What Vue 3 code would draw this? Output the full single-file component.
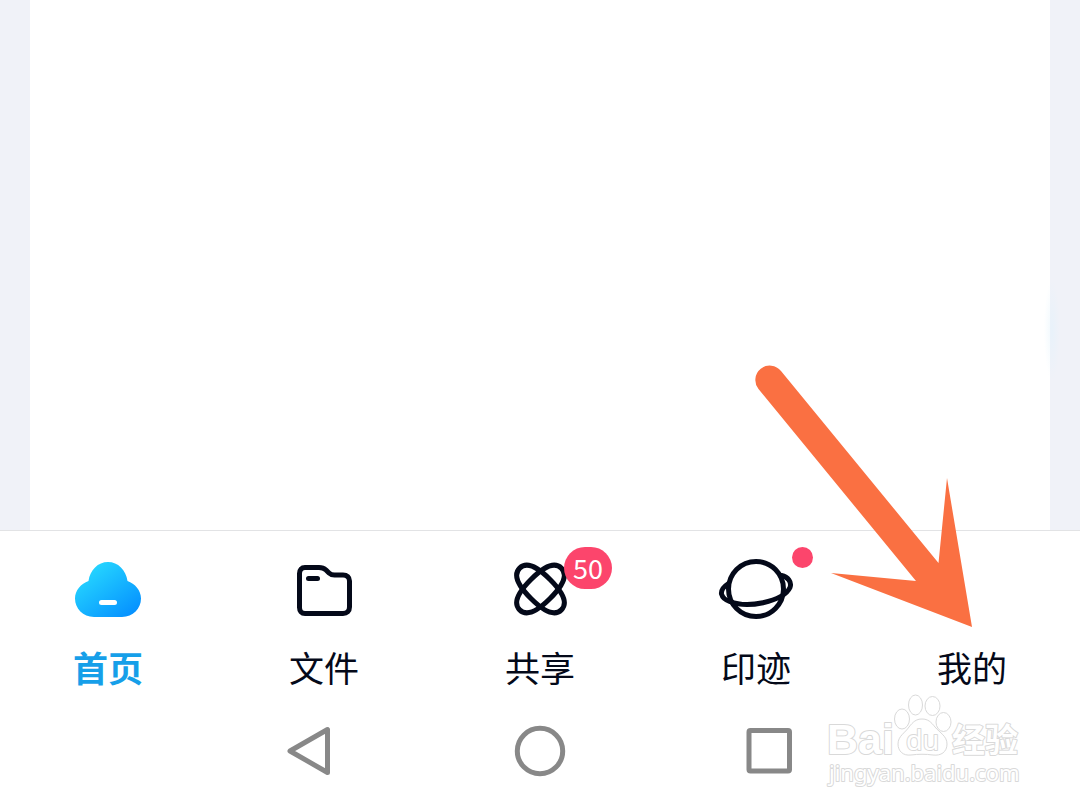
<script setup>
const tabs = [
  { id: 'home', label: '首页', active: true },
  { id: 'files', label: '文件' },
  { id: 'share', label: '共享', count: 50 },
  { id: 'moments', label: '印迹', dot: true },
  { id: 'mine', label: '我的' },
]
</script>

<template>
  <div class="screen">
    <main class="content">
      <section class="sheet"></section>
      <span class="edge-glow" aria-hidden="true"></span>
    </main>

    <nav class="tabs">
      <button
        v-for="tab in tabs"
        :key="tab.id"
        type="button"
        class="tab"
        :class="{ active: tab.active }"
      >
        <span class="icon">
          <svg v-if="tab.id === 'home'" viewBox="0 0 100 76">
            <defs>
              <linearGradient id="cloud" x1="0.15" y1="0.1" x2="0.9" y2="0.95">
                <stop offset="0" stop-color="#27d9ff" />
                <stop offset="1" stop-color="#0590ff" />
              </linearGradient>
            </defs>
            <path
              d="M36 69C25 69 17 60.500 17 50.500C17 42.500 23 35.500 30.500 33C32 22 40 14 50 14C60 14 68 22 69.500 33C77 35.500 83 42.500 83 50.500C83 60.500 75 69 64 69Z"
              fill="url(#cloud)"
            />
            <path d="M43.500 54.500H56.500" stroke="#fff" stroke-width="5" stroke-linecap="round" />
          </svg>
          <svg v-else-if="tab.id === 'files'" viewBox="0 0 100 76" class="line">
            <path
              d="M31 19.500H45C48 19.500 50 20.200 52 22L55 25C56.500 26.500 58 27 60.500 27H69C73 27 75.500 29.500 75.500 33V59C75.500 63 73 65.500 69 65.500H31C27.500 65.500 25.500 63 25.500 59.500V25.500C25.500 21.700 27.500 19.500 31 19.500Z"
            />
            <path d="M34.500 30.500H43.500" />
          </svg>
          <svg v-else-if="tab.id === 'share'" viewBox="0 0 100 76" class="line">
            <path
              v-for="angle in [45, -45]"
              :key="angle"
              :transform="`translate(50.5 41) rotate(${angle})`"
              d="M-29.500 0C-29.500 -11 -14 -13.500 0 -13.500S29.500 -11 29.500 0S14 13.500 0 13.500S-29.500 11 -29.500 0Z"
            />
          </svg>
          <svg v-else-if="tab.id === 'moments'" viewBox="0 0 100 76" class="line">
            <circle cx="50" cy="41" r="27.500" />
            <path
              d="M22.500 35.500C17 39 15 42 15.500 46C16.500 50 19 52 24 53.500C34 57.500 46 57 57 54.700C67 52.500 80 48 84 39.500C86 34 82 29 75.500 27.500"
            />
          </svg>
        </span>
        <span v-if="tab.count" class="badge">{{ tab.count }}</span>
        <span v-if="tab.dot" class="dot"></span>
        <span class="label">{{ tab.label }}</span>
      </button>
      <svg class="arrow" viewBox="0 0 260 280" aria-hidden="true">
        <path
          d="M41 20L198.500 212L207 127L232 276L91 222L176 230L18.500 38A13.600 13.600 0 0 1 41 20Z"
          fill="#fa7042"
        />
      </svg>
    </nav>

    <footer class="system">
      <button type="button" aria-label="Back">
        <svg viewBox="0 0 54 54"><path d="M7 27L44.500 5.500V48.500Z" /></svg>
      </button>
      <button type="button" aria-label="Home">
        <svg viewBox="0 0 54 54"><circle cx="27" cy="27" r="22.700" /></svg>
      </button>
      <button type="button" aria-label="Recents">
        <svg viewBox="0 0 54 54"><rect x="6" y="6.500" width="40.500" height="40.500" rx="1.500" /></svg>
      </button>
      <svg class="watermark" viewBox="0 0 210 100">
        <text x="7" y="64" class="brand">Bai</text>
        <ellipse cx="82" cy="29" rx="7.500" ry="10" />
        <ellipse cx="95.500" cy="15" rx="7" ry="10" />
        <ellipse cx="112.500" cy="16" rx="7.500" ry="9.500" />
        <ellipse cx="123.500" cy="32" rx="7.500" ry="9.500" />
        <path
          d="M102 29C108 29 111 32 115 37C120 43 127 46 127 54C127 62 121 66 113 65C106 64 98 64 91 65C83 66 78 61 78 54C78 46 85 43 89 37C93 32 96 29 102 29Z"
        />
        <text x="86" y="60" class="du">du</text>
        <text x="132" y="62" class="cjk">经验</text>
        <text x="9" y="91" class="url">jingyan.baidu.com</text>
      </svg>
    </footer>
  </div>
</template>

<style>
body {
  margin: 0;
  background: #fff;
}
</style>

<style scoped>
.screen {
  display: flex;
  flex-direction: column;
  min-height: 100vh;
  overflow: hidden;
  font-family: "Noto Sans CJK SC", sans-serif;
}

.content {
  position: relative;
  display: flex;
  flex: 1;
  padding: 0 30px;
  background: #f0f2f8;
}

.sheet {
  flex: 1;
  background: #fff;
}

.edge-glow {
  position: absolute;
  right: 20px;
  bottom: 150px;
  width: 16px;
  height: 100px;
  border-radius: 8px;
  background: radial-gradient(closest-side, rgba(225, 242, 252, 0.5), rgba(225, 242, 252, 0));
}

button {
  border: 0;
  padding: 0;
  background: none;
  font-family: inherit;
}

.tabs {
  position: relative;
  display: grid;
  grid-template-columns: repeat(5, 1fr);
  border-top: 1px solid #e2e3e5;
  background: #fff;
}

.tab {
  position: relative;
  display: flex;
  flex-direction: column;
  align-items: center;
  gap: 18px;
  padding: 17px 0 12px;
  color: #040919;
}

.icon {
  width: 100px;
  height: 76px;
}

svg {
  display: block;
}

.line {
  fill: none;
  stroke: #040919;
  stroke-width: 5;
  stroke-linecap: round;
  stroke-linejoin: round;
}

.label {
  font-size: 35px;
  line-height: 50px;
}

.active .label {
  color: #169fe9;
  font-weight: 700;
}

.badge {
  position: absolute;
  top: 16px;
  left: calc(50% + 24px);
  width: 48px;
  height: 42px;
  border-radius: 21px;
  background: #fc456c;
  color: #fff;
  font-size: 27px;
  line-height: 42px;
  text-align: center;
}

.dot {
  position: absolute;
  top: 16px;
  left: calc(50% + 36px);
  width: 21px;
  height: 21px;
  border-radius: 50%;
  background: #fc456c;
}

.arrow {
  position: absolute;
  right: 80px;
  bottom: 73px;
  width: 260px;
  height: 280px;
  pointer-events: none;
}

.system {
  position: relative;
  display: grid;
  grid-template-columns: repeat(3, 1fr);
  justify-items: center;
  padding: 20px 18% 32px;
  background: #fff;
}

.system button svg {
  width: 54px;
  height: 54px;
  fill: none;
  stroke: #888;
  stroke-width: 5;
  stroke-linejoin: round;
}

.watermark {
  position: absolute;
  right: 50px;
  bottom: 20px;
  width: 210px;
  height: 100px;
  fill: #fff;
  stroke: #d9d9d9;
  stroke-width: 1;
}

.watermark text {
  paint-order: stroke;
  stroke-width: 2;
  stroke-linejoin: round;
}

.brand {
  font: 700 43px "Liberation Sans", sans-serif;
}

.du {
  font: 400 27px "Noto Sans", sans-serif;
}

.cjk {
  font: 700 33px "Noto Sans CJK SC", sans-serif;
}

.url {
  font: 400 22px "Noto Sans", sans-serif;
}
</style>
